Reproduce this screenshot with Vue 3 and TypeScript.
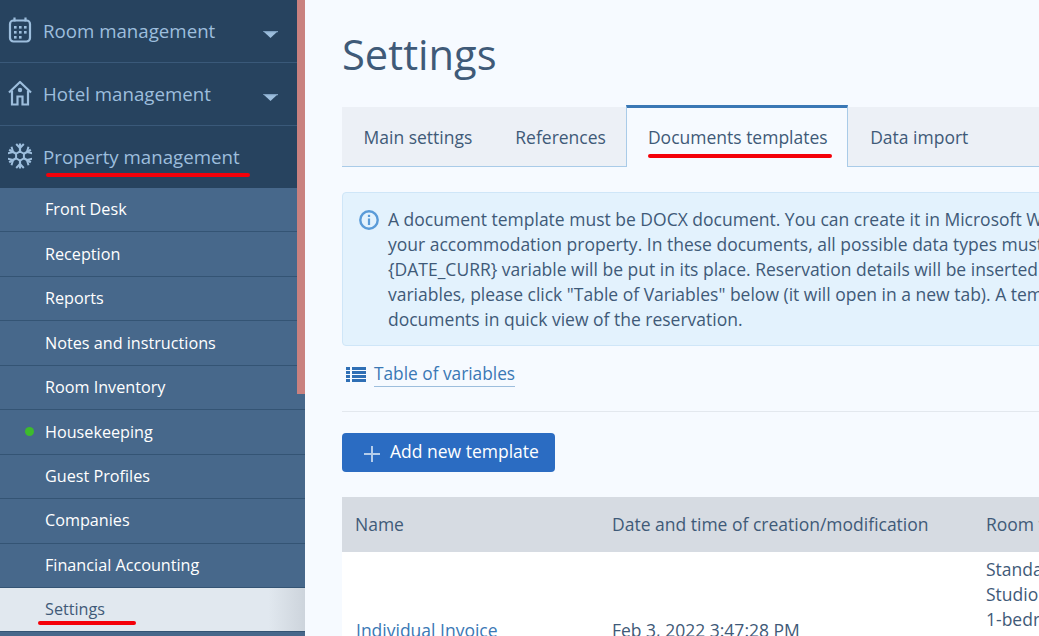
<script setup lang="ts">
interface Head { label: string; icon: string; caret: boolean }
const heads: Head[] = [
  { label: 'Room management', icon: 'cal', caret: true },
  { label: 'Hotel management', icon: 'home', caret: true },
  { label: 'Property management', icon: 'snow', caret: false },
]
const subs: string[] = ['Front Desk', 'Reception', 'Reports', 'Notes and instructions', 'Room Inventory', 'Housekeeping', 'Guest Profiles', 'Companies', 'Financial Accounting', 'Settings']
const tabs: string[] = ['Main settings', 'References', 'Documents templates', 'Data import']
const lines: string[] = [
  'A document template must be DOCX document. You can create it in Microsoft Word or use a template for',
  'your accommodation property. In these documents, all possible data types must be replaced with variables.',
  '{DATE_CURR} variable will be put in its place. Reservation details will be inserted automatically. To see all',
  'variables, please click "Table of Variables" below (it will open in a new tab). A template can be found in',
  'documents in quick view of the reservation.',
]
const calDots: { x: number; y: number }[] = [
  { x: 6, y: 9 }, { x: 11, y: 9 }, { x: 16, y: 9 },
  { x: 6, y: 14 }, { x: 11, y: 14 }, { x: 16, y: 14 },
  { x: 6, y: 19 }, { x: 11, y: 19 },
]
const angles: number[] = [0, 60, 120, 180, 240, 300]
</script>

<template>
  <div class="page">
    <aside class="side">
      <div v-for="h in heads" :key="h.label" class="head">
        <svg v-if="h.icon === 'cal'" class="hicon" viewBox="0 0 24 26" fill="none" stroke="#9dbedd">
          <rect x="2" y="3.500" width="20" height="21" rx="3.500" stroke-width="2.200" />
          <path d="M6.500 0.500v4M17.500 0.500v4" stroke-width="2.200" />
          <rect v-for="d in calDots" :key="d.x + '-' + d.y" :x="d.x" :y="d.y" width="2.600" height="2.600" fill="#9dbedd" stroke="none" />
        </svg>
        <svg v-else-if="h.icon === 'home'" class="hicon" viewBox="0 0 24 26" fill="none" stroke="#9dbedd" stroke-width="2.200">
          <path d="M1 12.500 12 2l11 10.500" stroke-linejoin="round" />
          <path d="M4 10.500V24.500h5.500v-8h5v8H20V10.500" />
          <circle cx="12" cy="10" r="2.200" fill="#9dbedd" stroke="none" />
        </svg>
        <svg v-else class="hicon" viewBox="-12 -13 24 26" fill="none" stroke="#9dbedd">
          <g v-for="a in angles" :key="a" :transform="`rotate(${a})`">
            <path d="M0 -4V-12.500" stroke-width="2.200" />
            <path d="M-3.800 -12 0 -8 3.800 -12" stroke-width="2" />
          </g>
          <path d="M0 -4.500 3.900 -2.250V2.250L0 4.500-3.900 2.250V-2.250z" stroke-width="2" />
        </svg>
        <span class="hlabel">{{ h.label }}</span>
        <svg v-if="h.caret" class="caret" viewBox="0 0 15 7"><path d="M0 0h15L7.500 7z" fill="#9dbedd" /><path d="M0 0h15v1.200H1.300z" fill="#7d9fc0" /></svg>
      </div>
      <div v-for="s in subs" :key="s" class="sub" :class="{ active: s === 'Settings' }">
        <i v-if="s === 'Housekeeping'" class="dot"></i>
        <span>{{ s }}</span>
      </div>
      <div class="rest"></div>
      <div class="scroll"></div>
      <i class="mark m1"></i>
      <i class="mark m2"></i>
    </aside>

    <main class="main">
      <div class="inner">
        <h1 class="title">Settings</h1>
        <div class="tabs">
          <div v-for="t in tabs" :key="t" class="tab" :class="{ on: t === 'Documents templates' }">
            {{ t }}
            <i v-if="t === 'Documents templates'" class="mark m3"></i>
          </div>
        </div>
        <div class="alert">
          <svg class="info" viewBox="0 0 20 20" fill="none">
            <circle cx="10" cy="10" r="8.700" stroke="#5a9bd8" stroke-width="2.400" />
            <rect x="8.900" y="8.500" width="2.200" height="6.500" fill="#5a9bd8" />
            <rect x="8.900" y="4.800" width="2.200" height="2.200" fill="#5a9bd8" />
          </svg>
          <div class="atext"><div v-for="l in lines" :key="l">{{ l }}</div></div>
        </div>
        <div class="tov">
          <svg class="list" viewBox="0 0 20 15" fill="#2f6fb5">
            <rect y="0" width="4" height="3" /><rect x="6" y="0" width="14" height="3" />
            <rect y="4" width="4" height="3" /><rect x="6" y="4" width="14" height="3" />
            <rect y="8" width="4" height="3" /><rect x="6" y="8" width="14" height="3" />
            <rect y="12" width="4" height="3" /><rect x="6" y="12" width="14" height="3" />
          </svg>
          <span class="tovlink">Table of variables</span>
        </div>
        <hr class="rule" />
        <button class="add" type="button">
          <svg class="plus" viewBox="0 0 16 16"><path d="M8 0v16M0 8h16" stroke="#b5cdea" stroke-width="2" /></svg>
          Add new template
        </button>
        <div class="table">
          <div class="cell th c1">Name</div>
          <div class="cell th c2">Date and time of creation/modification</div>
          <div class="cell th c3">Room type</div>
          <div class="cell td c1 name">Individual Invoice</div>
          <div class="cell td c2">Feb 3, 2022 3:47:28 PM</div>
          <div class="cell td c3 rooms">
            <div>Standard</div><div>Studio</div><div>1-bedroom</div><div>2-bedroom</div>
          </div>
        </div>
      </div>
    </main>
  </div>
</template>

<style scoped>
.page { display: flex; width: 1039px; height: 636px; overflow: hidden; background: #f6faff; font-family: "Open Sans", sans-serif; font-size: 16px; color: #3f5a78; }
.side { position: relative; flex: 0 0 305px; display: flex; flex-direction: column; overflow: hidden; background: #47688b; }
.head { display: flex; align-items: center; flex: none; height: 60px; padding-bottom: 2px; border-bottom: 1px solid #3a5979; background: #27435f; color: #9dbedd; font-size: 18.700px; }
.head:nth-child(3) { border-bottom: 0; }
.hicon { flex: none; width: 24px; height: 26px; margin: -1px 11px 0 8px; }
.hlabel { flex: 1; }
.caret { flex: none; width: 15px; height: 7px; margin: 9px 27px 0 0; }
.sub { position: relative; display: flex; align-items: center; height: 42.750px; padding: 0 0 0.700px 45px; border-bottom: 1px solid #345474; color: #fff; font-size: 16.200px; flex: none; }
.sub.active { background: linear-gradient(90deg, #e1e8ef 0, #e1e8ef 88%, #cdd4dc 100%); color: #3f5a78; }
.dot { position: absolute; left: 25px; top: 17px; width: 9px; height: 9px; border-radius: 50%; background: #3dbb2c; }
.rest { flex: 1; background: #47688b; }
.scroll { position: absolute; left: 297px; top: 0; width: 8px; height: 394px; background: #c9817f; }
.mark { position: absolute; display: block; height: 4px; border-radius: 2px; background: #f40009; }
.m1 { left: 46px; top: 173px; width: 204px; }
.m2 { left: 38px; top: 621px; width: 98px; }
.main { flex: 1; overflow: hidden; min-width: 0; }
.inner { width: 1100px; margin-left: 37px; }
.title { margin: 0; padding-top: 26px; height: 107px; box-sizing: border-box; font-size: 41.700px; line-height: 56px; font-weight: 400; color: #3f5a78; }
.tabs { display: flex; height: 59px; align-items: stretch; border-bottom: 1px solid #a9cbe8; background: #ecf0f6; }
.tab { position: relative; display: flex; align-items: center; padding: 0 21.500px; font-size: 17.500px; color: #3f5a78; }
.tab.on { height: 62px; margin: -2px 0 0 -1px; padding: 0 19.500px 2px 20.500px; background: #f6faff; border: 1px solid #a9cbe8; border-top: 3px solid #3a78b5; border-bottom: 0; box-sizing: border-box; }
.tab.on + .tab { padding-left: 22px; }
.m3 { left: 21px; top: 46px; width: 184px; }
.alert { display: flex; margin-top: 25px; height: 154px; box-sizing: border-box; background: #e3f2fd; border: 1px solid #cfe6f8; border-radius: 4px; padding: 14px 0 0 16px; }
.info { flex: none; width: 20px; height: 20px; margin: 3px 9px 0 0; }
.atext { font-size: 17.500px; line-height: 25px; color: #3f5a78; white-space: nowrap; }
.tov { display: flex; align-items: center; height: 54px; padding: 1px 0 0 4px; }
.list { flex: none; width: 20px; height: 15px; margin-right: 8px; }
.tovlink { font-size: 17.300px; line-height: 24px; color: #3a78b5; border-bottom: 1px solid #9dbedd; }
.rule { margin: 10px 0 0; border: 0; border-top: 1px solid #e3e8ee; }
.add { display: flex; align-items: center; margin-top: 21px; width: 213px; height: 39px; padding: 0 0 4px 22px; border: 0; border-radius: 4px; background: #2b6cc2; color: #fff; font: 400 17.500px "Open Sans", sans-serif; }
.plus { flex: none; width: 16px; height: 16px; margin: 6px 10px 0 0; }
.table { display: grid; grid-template-columns: 257px 374px 1fr; grid-template-rows: 55px 200px; margin-top: 25px; background: #fff; }
.cell { padding-left: 13px; font-size: 17.500px; }
.th { display: flex; align-items: center; padding-bottom: 2px; background: #d6dbe2; color: #3f5a78; }
.td { padding-top: 66px; line-height: 25px; color: #3f5a78; }
.name { padding-left: 14px; color: #3a78b5; }
.td.rooms { padding-top: 5px; }
</style>

<style>
html, body { margin: 0; overflow: hidden; }
</style>
